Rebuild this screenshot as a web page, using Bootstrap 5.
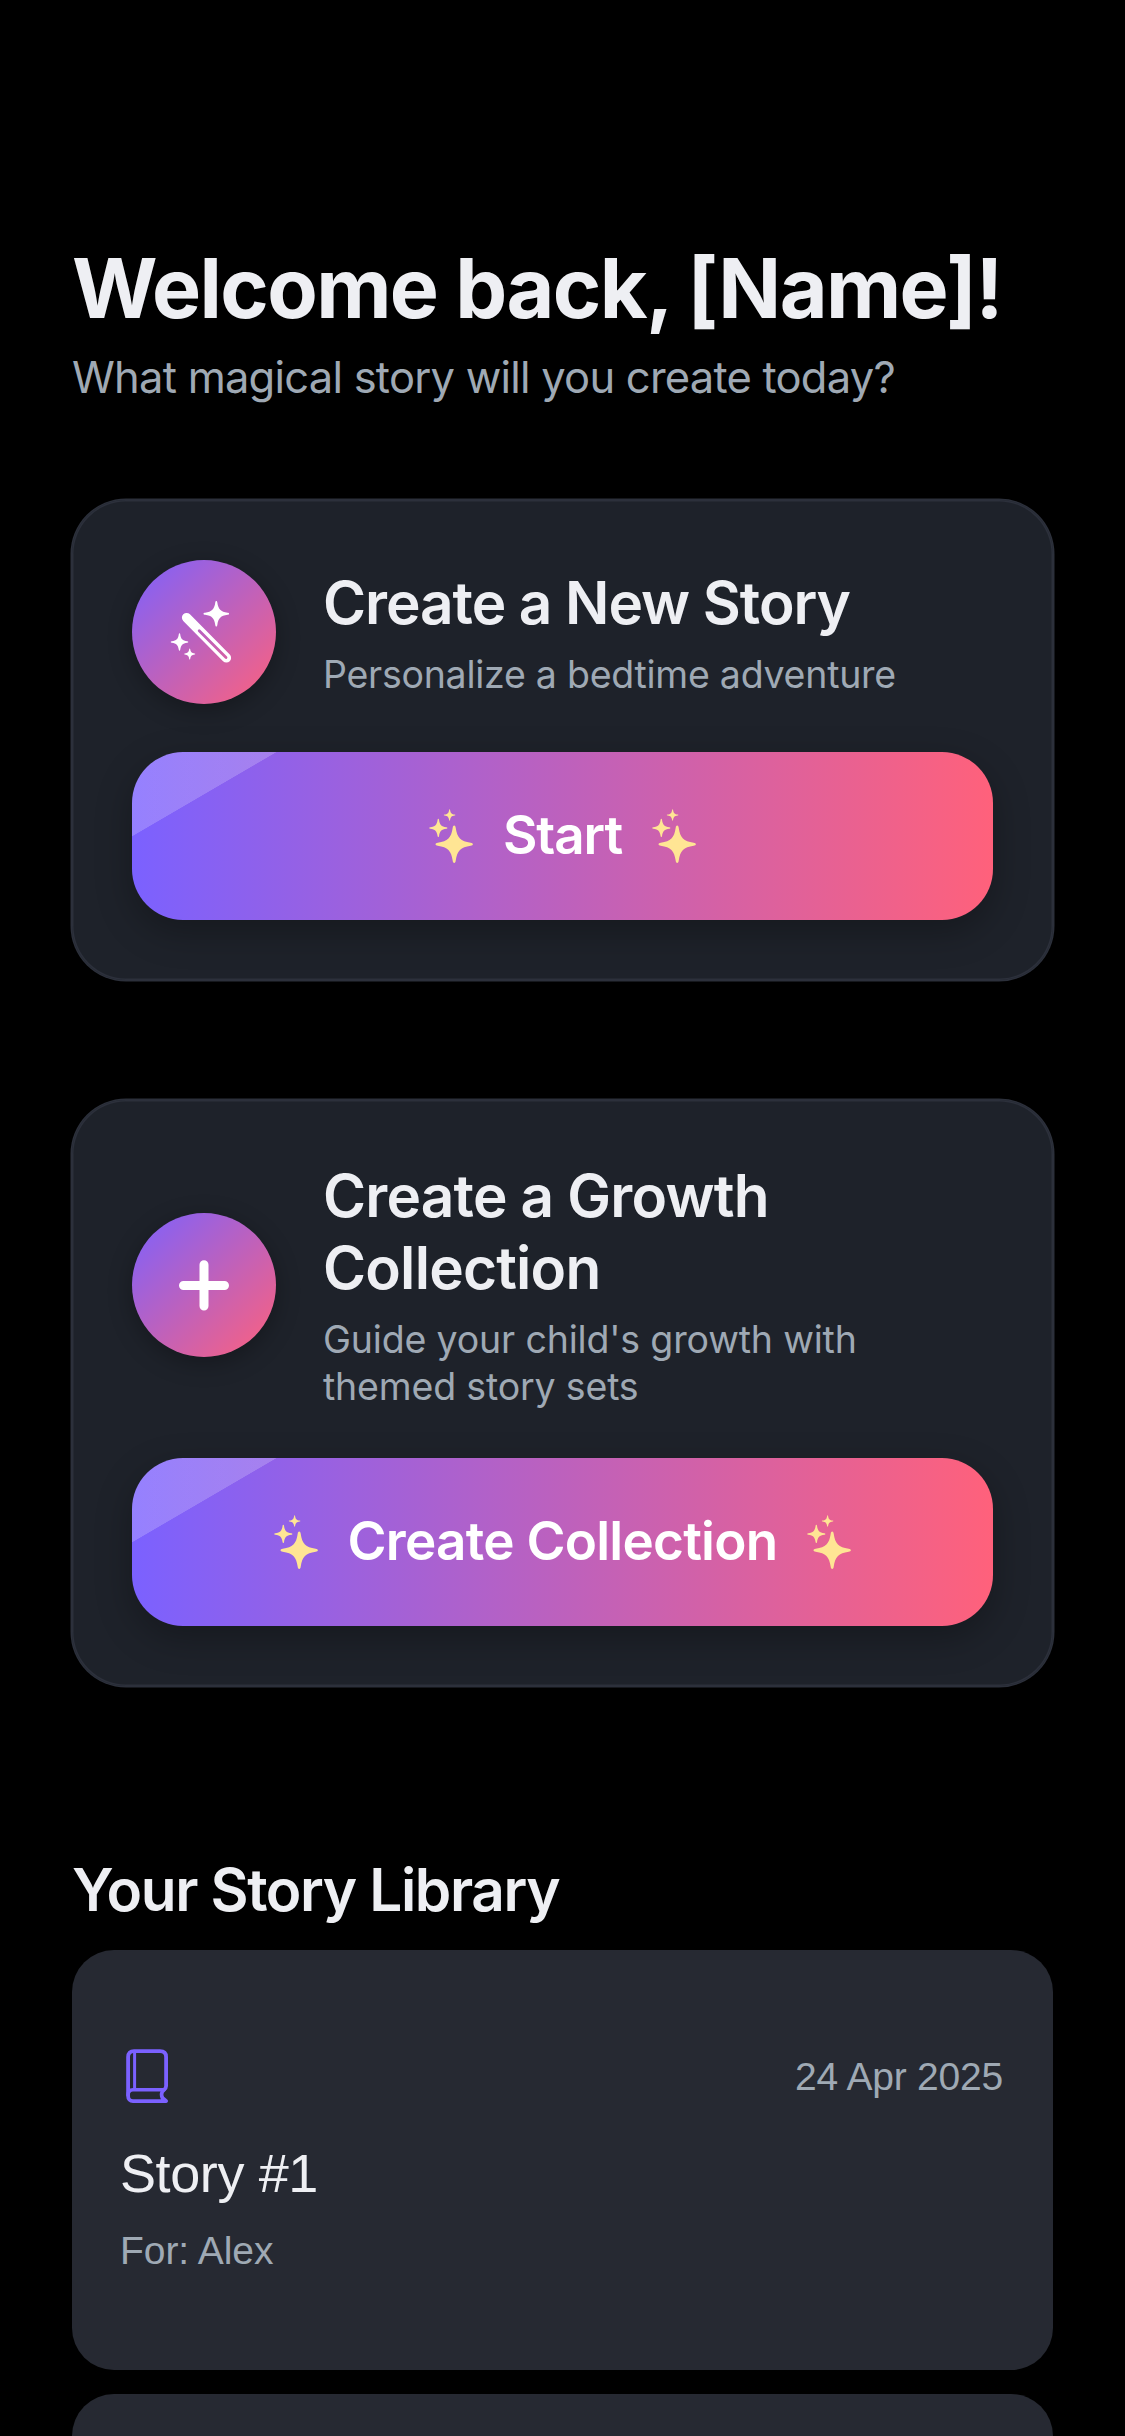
<!DOCTYPE html>
<html lang="en">
<head>
<meta charset="utf-8">
<meta name="viewport" content="width=device-width, initial-scale=1">
<title>Story Home</title>
<link href="https://cdn.jsdelivr.net/npm/bootstrap@5.3.0/dist/css/bootstrap.min.css" rel="stylesheet">
<style>
  body { background: #000; color: #eeeff3; font-family: Inter, "Liberation Sans", sans-serif; height: 2436px; overflow: hidden; }
  .screen { padding: 238px 72px 0; height: 2436px; overflow: hidden; }
  .ink { color: #eeeff3; }
  .soft { color: #9fa9b4; }
  .hero-title { font-size: 82.5px; line-height: 100px; font-weight: 700; letter-spacing: -1.6px; margin: 0 0 12px; white-space: nowrap; }
  .hero-sub { font-size: 43.5px; line-height: 54px; letter-spacing: -.77px; margin-bottom: 96px; }
  .panel { background: #1e222a; border: 0; border-radius: 54px; padding: 60px; gap: 48px; box-shadow: 0 0 0 1.5px #2c303b, inset 0 0 0 1.5px #2c303b; }
  .panel + .panel { margin-top: 120px; }
  .panel-head { gap: 47px; height: 144px; }
  .panel-head.tall { height: 250px; }
  .orb { width: 144px; height: 144px; background: linear-gradient(135deg, #7b61ff, #ff617b); box-shadow: 0 6px 24px rgba(0,0,0,.3); }
  .panel-title { font-size: 58.5px; line-height: 72px; font-weight: 600; letter-spacing: -1.05px; margin-bottom: 12px; }
  .panel-title.two-line { letter-spacing: -.8px; }
  .panel-sub { font-size: 37.5px; line-height: 47px; letter-spacing: -.257px; margin: 0; }
  .panel-sub.two-line { letter-spacing: -.17px; }
  .cta { height: 168px; border: 0; border-radius: 51px; gap: 28px; color: #fff; font-size: 53px; font-weight: 600; letter-spacing: -.75px;
    background: linear-gradient(to bottom right, rgba(255,255,255,.2) 50%, transparent 50.4%) 0 0 / 144px 84px no-repeat, linear-gradient(to right, #7b61ff, #ff617b);
    box-shadow: 0 12px 36px rgba(0,0,0,.28); }
  .cta:hover { color: #fff; }
  .cta.brief { letter-spacing: -1.1px; }
  .lib-title { font-size: 58.5px; line-height: 72px; font-weight: 600; letter-spacing: -1.38px; margin: 168px 0 24px; }
  .story { background: #262932; border: 0; border-radius: 42px; height: 420px; padding: 99px 48px 0; font-family: "Liberation Sans", Arial, sans-serif; }
  .story + .story { margin-top: 24px; }
  .story-date { font-size: 39px; line-height: 48px; letter-spacing: -.22px; padding: 1px 2px 0 0; }
  .story-name { font-size: 54px; line-height: 66px; font-weight: 400; letter-spacing: -.4px; margin: 37px 0 21px; }
  .story-for { font-size: 39px; line-height: 48px; letter-spacing: -.05px; margin: 0; }
</style>
</head>
<body>
<svg width="0" height="0" class="d-block" aria-hidden="true">
  <defs>
    <path id="star" d="M0-10C.5-10 .7-9.5 .8-8.8C1.6-3.4 3.4-1.6 8.8-.8C9.5-.7 10-.5 10 0C10 .5 9.5 .7 8.8 .8C3.4 1.6 1.6 3.4 .8 8.8C.7 9.5 .5 10 0 10C-.5 10-.7 9.5-.8 8.8C-1.6 3.4-3.4 1.6-8.8 .8C-9.5 .7-10 .5-10 0C-10-.5-9.5-.7-8.8-.8C-3.4-1.6-1.6-3.4-.8-8.8C-.7-9.5-.5-10 0-10Z"/>
    <symbol id="sparkles" viewBox="0 0 48 54">
      <use href="#star" transform="translate(27.2 35.3) scale(1.87)"/>
      <use href="#star" transform="translate(11.3 18.9) scale(.91)"/>
      <use href="#star" transform="translate(22.6 6) scale(.58)"/>
    </symbol>
    <mask id="slot" maskUnits="userSpaceOnUse" x="0" y="0" width="144" height="144">
      <rect width="144" height="144" fill="#fff"/>
      <path d="M67.2 70.8L94 97.5" stroke="#000" stroke-width="2.8" stroke-linecap="round"/>
    </mask>
  </defs>
</svg>
<main class="screen">
  <header>
    <h1 class="hero-title ink">Welcome back, [Name]!</h1>
    <p class="hero-sub soft">What magical story will you create today?</p>
  </header>

  <section class="panel card">
    <div class="panel-head d-flex align-items-center">
      <div class="orb rounded-circle flex-shrink-0">
        <svg width="144" height="144" viewBox="0 0 144 144" fill="#fff" class="d-block">
          <use href="#star" transform="translate(84.3 53.8) scale(1.28)"/>
          <use href="#star" transform="translate(47.5 82) scale(.88)"/>
          <use href="#star" transform="translate(57.7 94) scale(.56)"/>
          <path d="M54.6 57.6L94.4 97.9" stroke="#fff" stroke-width="9.4" stroke-linecap="round" mask="url(#slot)"/>
        </svg>
      </div>
      <div>
        <h2 class="panel-title ink">Create a New Story</h2>
        <p class="panel-sub soft">Personalize a bedtime adventure</p>
      </div>
    </div>
    <button type="button" class="cta brief btn d-flex align-items-center justify-content-center">
      <svg width="48" height="54" fill="#ffe594"><use href="#sparkles"/></svg>
      <span>Start</span>
      <svg width="48" height="54" fill="#ffe594"><use href="#sparkles"/></svg>
    </button>
  </section>

  <section class="panel card">
    <div class="panel-head tall d-flex align-items-center">
      <div class="orb rounded-circle flex-shrink-0">
        <svg width="144" height="144" viewBox="0 0 144 144" class="d-block">
          <path d="M51.5 72.5H92.5M72 51.8V93" stroke="#fff" stroke-width="9" stroke-linecap="round"/>
        </svg>
      </div>
      <div>
        <h2 class="panel-title two-line ink">Create a Growth<br>Collection</h2>
        <p class="panel-sub two-line soft">Guide your child's growth with<br>themed story sets</p>
      </div>
    </div>
    <button type="button" class="cta btn d-flex align-items-center justify-content-center">
      <svg width="48" height="54" fill="#ffe594"><use href="#sparkles"/></svg>
      <span>Create Collection</span>
      <svg width="48" height="54" fill="#ffe594"><use href="#sparkles"/></svg>
    </button>
  </section>

  <h2 class="lib-title ink">Your Story Library</h2>
  <article class="story card">
    <div class="d-flex align-items-center justify-content-between">
      <svg width="54" height="54" viewBox="0 0 54 54" fill="none" stroke="#7b61ff" stroke-width="3.8" stroke-linecap="round" stroke-linejoin="round">
        <path d="M46 52.1H13C10 52.1 8.1 50 8.1 47V8C8.1 4.2 10.2 2.1 14 2.1H40C44 2.1 46.1 4.2 46.1 8V37C46.1 38.8 45.3 40 43.9 41C41.2 43 41.2 46.5 42.5 49L46 52"/>
        <path d="M8.1 46C8.1 42.5 10 40.7 13 40.7H44" stroke-width="3.5"/>
        <path d="M14.6 3V40" stroke-width="3"/>
      </svg>
      <span class="story-date soft">24 Apr 2025</span>
    </div>
    <h3 class="story-name ink">Story #1</h3>
    <p class="story-for soft">For: Alex</p>
  </article>
  <article class="story card"></article>
</main>
<script src="https://cdn.jsdelivr.net/npm/bootstrap@5.3.0/dist/js/bootstrap.bundle.min.js"></script>
</body>
</html>
